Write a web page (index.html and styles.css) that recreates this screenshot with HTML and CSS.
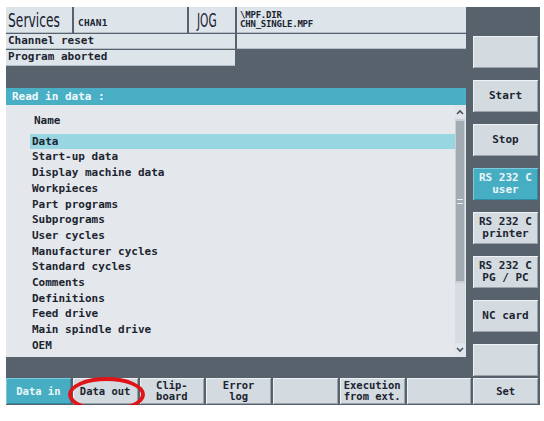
FILE: index.html
```html
<!DOCTYPE html>
<html>
<head>
<meta charset="utf-8">
<link rel="stylesheet" href="styles.css">
</head>
<body>
<div class="frame">
  <div class="top">
    <div class="main">
      <div class="hdr">
        <div class="box b-serv"><span class="big">Services</span></div>
        <div class="box b-chan"><span class="chan">CHAN1</span></div>
        <div class="box b-jog"><span class="big jog">JOG</span></div>
        <div class="box b-path"><div class="path">\MPF.DIR</div><div class="path">CHN_SINGLE.MPF</div></div>
      </div>
      <div class="row2">
        <div class="box msg">Channel reset</div>
        <div class="box msg-r"></div>
      </div>
      <div class="row3">
        <div class="box msg">Program aborted</div>
      </div>
      <div class="title">Read in data :</div>
      <div class="list">
        <div class="items">
          <div class="name">Name</div>
          <div class="item sel">Data</div>
          <div class="item">Start-up data</div>
          <div class="item">Display machine data</div>
          <div class="item">Workpieces</div>
          <div class="item">Part programs</div>
          <div class="item">Subprograms</div>
          <div class="item">User cycles</div>
          <div class="item">Manufacturer cycles</div>
          <div class="item">Standard cycles</div>
          <div class="item">Comments</div>
          <div class="item">Definitions</div>
          <div class="item">Feed drive</div>
          <div class="item">Main spindle drive</div>
          <div class="item">OEM</div>
        </div>
        <div class="sbar">
          <div class="arrow"><svg width="8" height="6" viewBox="0 0 8 6"><path d="M1 5 L4 2 L7 5" fill="none" stroke="#4a5460" stroke-width="1.6"/></svg></div>
          <div class="thumb"><span class="grip"></span></div>
          <div class="track"></div>
          <div class="arrow"><svg width="8" height="6" viewBox="0 0 8 6"><path d="M1 1 L4 4 L7 1" fill="none" stroke="#4a5460" stroke-width="1.6"/></svg></div>
        </div>
      </div>
    </div>
    <div class="side">
      <div class="sk"></div>
      <div class="sk">Start</div>
      <div class="sk">Stop</div>
      <div class="sk act"><span>RS 232 C</span><span>user</span></div>
      <div class="sk"><span>RS 232 C</span><span>printer</span></div>
      <div class="sk"><span>RS 232 C</span><span>PG / PC</span></div>
      <div class="sk">NC card</div>
      <div class="sk"></div>
    </div>
  </div>
  <div class="bottom">
    <div class="sk act">Data in</div>
    <div class="sk">Data out</div>
    <div class="sk"><span>Clip-</span><span>board</span></div>
    <div class="sk"><span>Error</span><span>log</span></div>
    <div class="sk"></div>
    <div class="sk"><span>Execution</span><span>from ext.</span></div>
    <div class="sk"></div>
    <div class="sk">Set</div>
  </div>
  <div class="circle"></div>
</div>
</body>
</html>
```

FILE: styles.css
```css
* { box-sizing: border-box; }
body {
  margin: 0;
  background: #ffffff;
  font-family: "DejaVu Sans Mono", "Liberation Mono", monospace;
  font-size: 11px;
  font-weight: bold;
  color: #1c2430;
}
.frame {
  position: relative;
  margin: 7px 0 0 6px;
  width: 534px;
  height: 398px;
  background: #58626c;
  display: flex;
  flex-direction: column;
}
.top {
  display: flex;
  height: 371px;
}
.main {
  width: 460px;
  display: flex;
  flex-direction: column;
}
.box {
  background: #dde5eb;
  border-bottom: 1px solid #b4bec6;
}
.hdr {
  display: flex;
  gap: 2px;
  height: 26px;
}
.b-serv { width: 66px; padding: 3px 0 0 2px; }
.b-chan { width: 113px; display: flex; align-items: flex-end; padding: 0 0 4px 4px; }
.b-jog { width: 46px; padding: 3px 0 0 8px; }
.b-path { flex: 1; padding: 3px 0 0 3px; }
.big {
  display: inline-block;
  font-family: "DejaVu Sans Condensed", "DejaVu Sans", sans-serif;
  font-weight: normal;
  font-size: 19px;
  line-height: 20px;
  transform: scaleX(0.72);
  transform-origin: left center;
  color: #1a2030;
}
.big.jog { transform: scaleX(0.62); }
.chan { font-size: 9.5px; letter-spacing: 0.2px; }
.path { font-size: 9px; line-height: 10px; height: 9px; letter-spacing: -0.2px; }
.row2 { display: flex; gap: 2px; margin-top: 1px; height: 15px; }
.row3 { display: flex; margin-top: 1px; height: 16px; }
.msg { width: 229px; padding-left: 2px; line-height: 14px; }
.msg-r { flex: 1; }
.title {
  margin-top: 22px;
  height: 17px;
  background: #48afc5;
  color: #f2fafc;
  line-height: 17px;
  padding-left: 6px;
}
.list {
  height: 252px;
  background: #e4e8ec;
  display: flex;
}
.items {
  flex: 1;
  padding: 8px 0 0 24px;
}
.name { line-height: 15.7px; padding-left: 4px; margin-bottom: 5px; }
.item { line-height: 15.7px; padding-left: 2px; }
.item.sel { background: #98d6e2; }
.sbar {
  width: 10px;
  margin-right: 1px;
  display: flex;
  flex-direction: column;
  background: #c8d0d6;
}
.arrow {
  height: 14px;
  display: flex;
  align-items: center;
  justify-content: center;
  background: #dfe5ea;
}
.thumb {
  height: 160px;
  margin: 2px 1px;
  background: #a2aab2;
  display: flex;
  align-items: center;
  justify-content: center;
}
.grip {
  width: 6px;
  height: 5px;
  border-top: 1px solid #e8ecef;
  border-bottom: 1px solid #e8ecef;
}
.track { flex: 1; background: #d6dce1; }
.side {
  margin-left: 7px;
  width: 65px;
  padding-top: 29px;
  display: flex;
  flex-direction: column;
  gap: 12px;
}
.sk {
  height: 32px;
  background: #d3dbe1;
  box-shadow: inset 1px 1px 0 #eef2f5, inset -1px -1px 0 #98a2aa;
  display: flex;
  flex-direction: column;
  align-items: center;
  justify-content: center;
  text-align: center;
  line-height: 12px;
  color: #1c2430;
}
.sk span { display: block; height: 12px; }
.sk.act { background: #46adc3; color: #eaf6f9; box-shadow: inset 1px 1px 0 #7ccbdc, inset -1px -1px 0 #2e8ea4; }
.bottom {
  height: 26px;
  display: grid;
  grid-template-columns: repeat(8, 1fr);
  gap: 2px;
  padding-right: 2px;
}
.bottom .sk { height: 26px; font-size: 10.5px; line-height: 11px; }
.bottom .sk span { height: 11px; }
.circle {
  position: absolute;
  left: 62px;
  top: 370px;
  width: 77px;
  height: 35px;
  border: 4px solid #e01418;
  border-radius: 50%;
}
```
